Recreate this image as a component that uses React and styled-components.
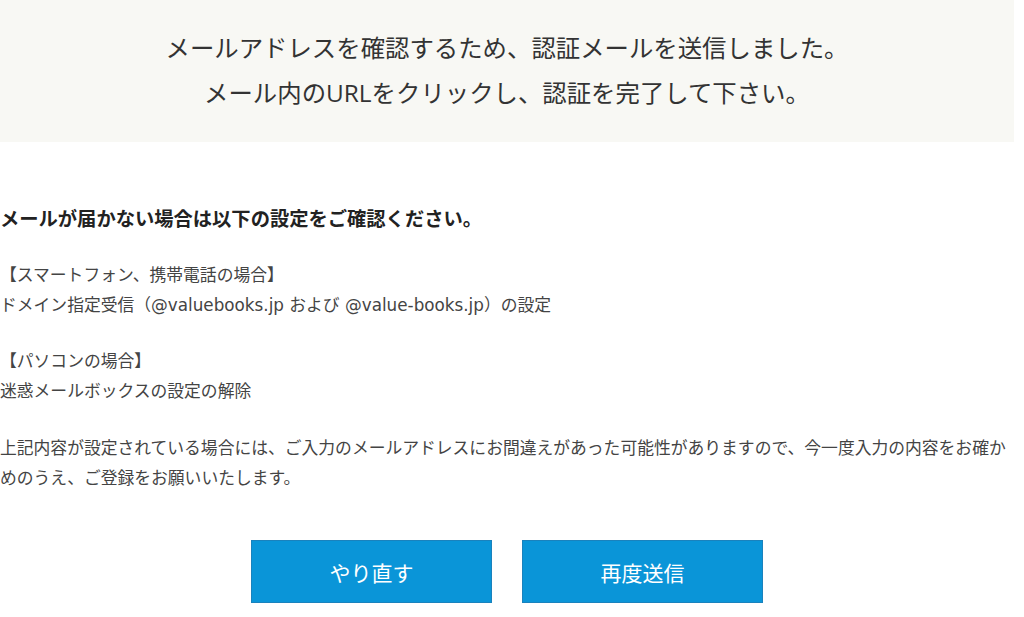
import React from 'react'
import styled, { createGlobalStyle } from 'styled-components'

const GlobalStyle = createGlobalStyle`
    body {
        margin : 0;
        background : #fff;
        font-family : "Open Sans", "Noto Sans CJK JP", sans-serif;
        color : #333;
    }
`

const Swrap = styled.div`
    width : 1014px;
`

// 送信完了メッセージの枠
const Snotice = styled.div`
    background : #f8f8f4;
    padding : 25px 0 27px;
    text-align : center;
    font-size : 24.4px;
    line-height : 45px;
    color : #333;
`

const Ssection = styled.section`
    padding-top : 63px;
`

const Sheading = styled.h2`
    margin : 0 0 27px;
    font-size : 19.3px;
    line-height : 28px;
    font-weight : 700;
    color : #222;
`

// 英字が広めの書体を先に置く
const Sblock = styled.p`
    margin : 0 0 ${(props) => props.gap || 26}px;
    font-family : "DejaVu Sans", "Noto Sans CJK JP", sans-serif;
    font-size : 16.8px;
    line-height : 30px;
    color : #444;
`

const Sbuttons = styled.div`
    display : flex;
    justify-content : center;
    gap : 30px;
    margin-top : 47px;
`

const Sbutton = styled.button`
    width : 241px;
    height : 63px;
    background : #0a95d8;
    border : 1px solid #1a82bd;
    color : #fff;
    font-family : inherit;
    font-size : 21px;
    cursor : pointer;
    :hover{
        background : #2aa5e2;
    }
`

function App() {
    return (
        <Swrap>
            <GlobalStyle />
            <Snotice>
                メールアドレスを確認するため、認証メールを送信しました。<br />
                メール内のURLをクリックし、認証を完了して下さい。
            </Snotice>
            <Ssection>
                <Sheading>メールが届かない場合は以下の設定をご確認ください。</Sheading>
                <Sblock>
                    【スマートフォン、携帯電話の場合】<br />
                    ドメイン指定受信（@valuebooks.jp および @value-books.jp）の設定
                </Sblock>
                <Sblock gap={27}>
                    【パソコンの場合】<br />
                    迷惑メールボックスの設定の解除
                </Sblock>
                <Sblock gap={0}>
                    上記内容が設定されている場合には、ご入力のメールアドレスにお間違えがあった可能性がありますので、今一度入力の内容をお確かめのうえ、ご登録をお願いいたします。
                </Sblock>
            </Ssection>
            <Sbuttons>
                <Sbutton>やり直す</Sbutton>
                <Sbutton>再度送信</Sbutton>
            </Sbuttons>
        </Swrap>
    )
}

export default App
